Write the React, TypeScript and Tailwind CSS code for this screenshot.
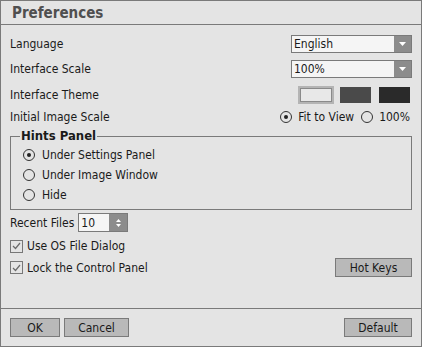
import React from "react"

const font = { fontFamily: "Tahoma, 'DejaVu Sans Condensed', 'Liberation Sans', sans-serif" }

function Select({ value }: { value: string }) {
  return (
    <div className="flex h-[18px] w-[121px] border border-[#7a7a7a] bg-[#f5f5f5]">
      <div className="flex flex-1 items-center pl-[2px] text-[12px] text-[#1a1a1a]">{value}</div>
      <div className="flex w-[17px] items-center justify-center bg-[#8c8c8c]">
        <svg width="7" height="4" viewBox="0 0 7 4">
          <path d="M0 0h7L3.5 4z" fill="#fff" />
        </svg>
      </div>
    </div>
  )
}

function Radio({ checked }: { checked?: boolean }) {
  return (
    <span className="flex h-[12px] w-[12px] items-center justify-center rounded-full border border-[#333]">
      {checked && <span className="h-[4px] w-[4px] rounded-full bg-[#222]" />}
    </span>
  )
}

function Check() {
  return (
    <span className="flex h-[13px] w-[13px] items-center justify-center border border-[#777] bg-[#e4e4e4]">
      <svg width="9" height="8" viewBox="0 0 9 8">
        <path d="M1 4l2.5 2.5L8 1" stroke="#6a6a6a" strokeWidth="1.2" fill="none" />
      </svg>
    </span>
  )
}

function Btn({ label, w }: { label: string; w: string }) {
  return (
    <div className={`flex h-[19px] items-center justify-center border border-[#7a7a7a] bg-[#b9b9b9] text-[12px] text-[#1a1a1a] ${w}`}>
      {label}
    </div>
  )
}

export default function App() {
  return (
    <div className="flex h-[347px] w-[422px] flex-col border border-[#7a7a7a] bg-[#e4e4e4] text-[12px] text-[#1a1a1a]" style={font}>
      {/* title */}
      <div className="flex h-[24px] items-center border-b border-[#7a7a7a] pl-[11px] pt-[2px] text-[15px] font-bold text-[#4f4f4f]">
        Preferences
      </div>

      <div className="flex flex-1 flex-col pl-[9px] pr-[9px] pt-[10px]">
        <div className="flex h-[18px] items-center justify-between">
          <span>Language</span>
          <Select value="English" />
        </div>
        <div className="mt-[7px] flex h-[18px] items-center justify-between">
          <span>Interface Scale</span>
          <Select value="100%" />
        </div>
        <div className="mt-[8px] flex h-[18px] items-center justify-between">
          <span>Interface Theme</span>
          <div className="flex items-center gap-[5px] pr-[2px]">
            <span className="h-[18px] w-[36px] border-2 border-[#b4b4b4] bg-[#e8e8e8] outline outline-1 -outline-offset-3 outline-[#8a8a8a]" />
            <span className="ml-[1px] h-[16px] w-[31px] bg-[#4a4a4a]" />
            <span className="ml-[3px] h-[16px] w-[31px] bg-[#2a2a2a]" />
          </div>
        </div>
        <div className="mt-[4px] flex h-[18px] items-center justify-between">
          <span>Initial Image Scale</span>
          <div className="flex items-center pr-[2px]">
            <Radio checked />
            <span className="ml-[6px]">Fit to View</span>
            <span className="ml-[7px]"><Radio /></span>
            <span className="ml-[6px]">100%</span>
          </div>
        </div>

        {/* hints group */}
        <div className="relative mt-[10px] h-[74px] border border-[#7a7a7a] pl-[12px] pt-[8px]">
          <span className="absolute left-[9px] top-[-9px] bg-[#e4e4e4] px-[1px] text-[13px] font-bold leading-[16px]">Hints Panel</span>
          {["Under Settings Panel", "Under Image Window", "Hide"].map((t, i) => (
            <div key={t} className="flex h-[20px] items-center gap-[7px]">
              <Radio checked={i === 0} />
              <span>{t}</span>
            </div>
          ))}
        </div>

        <div className="mt-[3px] flex h-[19px] items-center">
          <span>Recent Files</span>
          <div className="ml-[4px] flex h-[19px] w-[50px] border border-[#7a7a7a] bg-[#f5f5f5]">
            <span className="flex flex-1 items-center pl-[2px]">10</span>
            <span className="flex w-[18px] flex-col items-center justify-center gap-[2px] bg-[#8c8c8c]">
              <svg width="5" height="3" viewBox="0 0 5 3"><path d="M2.5 0L5 3H0z" fill="#fff" /></svg>
              <svg width="5" height="3" viewBox="0 0 5 3"><path d="M0 0h5L2.5 3z" fill="#fff" /></svg>
            </span>
          </div>
        </div>
        <div className="mt-[5px] flex h-[18px] items-center gap-[4px]">
          <Check />
          <span>Use OS File Dialog</span>
        </div>
        <div className="mt-[3px] flex h-[19px] items-center justify-between">
          <div className="flex items-center gap-[4px]">
            <Check />
            <span>Lock the Control Panel</span>
          </div>
          <Btn label="Hot Keys" w="w-[77px]" />
        </div>
      </div>

      {/* footer */}
      <div className="flex h-[38px] items-start justify-between border-t border-[#7a7a7a] px-[9px] pt-[9px]">
        <div className="flex gap-[4px]">
          <Btn label="OK" w="w-[50px]" />
          <Btn label="Cancel" w="w-[65px]" />
        </div>
        <Btn label="Default" w="w-[68px]" />
      </div>
    </div>
  )
}
